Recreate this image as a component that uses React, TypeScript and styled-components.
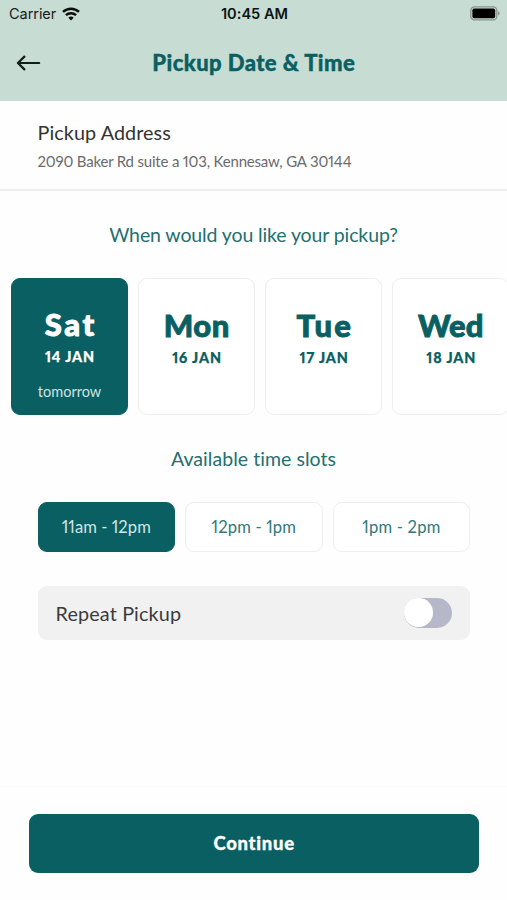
import React, { useState } from "react";
import styled, { createGlobalStyle } from "styled-components";

const TEAL = "#0a5f62";
const MINT = "#c7dcd3";
const LINE = "#eeeeee";

const GlobalStyle = createGlobalStyle`
  *, *::before, *::after { box-sizing: border-box; }
  body {
    margin: 0;
    background: #fefefe;
    font-family: Lato, "Open Sans", sans-serif;
    font-variant-ligatures: none;
    font-variant-numeric: proportional-nums;
  }
  button { font: inherit; cursor: pointer; }
`;

const Screen = styled.div`
  width: 507px;
  height: 900px;
  display: flex;
  flex-direction: column;
  overflow: hidden;
  background: #fefefe;
`;

const Header = styled.header`
  flex: none;
  height: 100.5px;
  background: ${MINT};
`;

const StatusBar = styled.div`
  height: 27px;
  padding: 0 7px 0 9px;
  display: grid;
  grid-template-columns: 1fr auto 1fr;
  align-items: center;
  font-family: Inter, sans-serif;
  font-size: 14.5px;
  color: #17201e;
`;

const Carrier = styled.span`
  display: flex;
  align-items: center;
  gap: 6px;
  letter-spacing: -0.05px;
`;

const Clock = styled.time`
  font-weight: 600;
  font-size: 14.6px;
  color: #0c1413;
`;

const Battery = styled.svg`
  justify-self: end;
  display: block;
`;

const TitleBar = styled.div`
  height: 71px;
  padding: 0 16px;
  display: grid;
  grid-template-columns: 26px 1fr 26px;
  align-items: center;
`;

const BackButton = styled.button`
  padding: 0;
  border: 0;
  background: none;
  display: flex;
  color: #151d1b;
`;

/* letter-spacing adds a gap after the last letter; the margin takes it back */
const Spaced = styled.span<{ $gap: number }>`
  display: block;
  white-space: nowrap;
  letter-spacing: ${(p) => p.$gap}px;
  margin-right: ${(p) => -p.$gap}px;
`;

const Title = styled.h1`
  margin: 0;
  justify-self: center;
  font-size: 22px;
  line-height: 28px;
  font-weight: 900;
  -webkit-text-stroke: 0.4px;
  color: ${TEAL};
`;

const Address = styled.section`
  flex: none;
  height: 90px;
  padding: 19px 38px 0 37.5px;
  border-bottom: 2px solid ${LINE};
`;

const AddressTitle = styled.h2`
  margin: 0;
  font-size: 19.8px;
  line-height: 24px;
  font-weight: 400;
  color: #333;
`;

const AddressLine = styled.p`
  margin: 7px 0 0;
  font-size: 15px;
  line-height: 20px;
  color: #6b6b6b;
`;

const Heading = styled.h3`
  margin: 0;
  display: flex;
  justify-content: center;
  font-size: 19.5px;
  line-height: 24px;
  font-weight: 400;
  color: #23706f;
`;

const Main = styled.main`
  flex: 1;
  min-height: 0;
  padding-top: 32px;
`;

const Days = styled.div`
  margin: 31px 0 32px;
  padding-left: 11px;
  display: flex;
  gap: 10.1px;
  overflow: hidden;
`;

const DayCard = styled.button<{ $active: boolean }>`
  flex: none;
  width: 117px;
  height: 137px;
  padding: ${(p) => (p.$active ? 27 : 28)}px 0 0;
  display: flex;
  flex-direction: column;
  align-items: center;
  border: 1.5px solid ${(p) => (p.$active ? TEAL : LINE)};
  border-radius: 9px;
  background: ${(p) => (p.$active ? TEAL : "#fff")};
  color: ${(p) => (p.$active ? "#fff" : TEAL)};
`;

const DayName = styled.span`
  font-size: 31px;
  line-height: 36px;
  font-weight: 900;
  -webkit-text-stroke: 0.9px;
`;

const DayDate = styled.span`
  margin-top: 6px;
  font-size: 14.3px;
  line-height: 18px;
  font-weight: 900;
  -webkit-text-stroke: 0.25px;
`;

const DayNote = styled.span`
  margin-top: 16px;
  font-size: 14.5px;
  line-height: 20px;
  color: #cfe3e1;
`;

const Slots = styled.div`
  margin: 31px 37px 0 37.5px;
  display: grid;
  grid-template-columns: repeat(3, 1fr);
  gap: 10px;
`;

const Slot = styled.button<{ $active: boolean }>`
  height: 50px;
  padding: 0;
  display: flex;
  align-items: center;
  justify-content: center;
  border: 1.5px solid ${(p) => (p.$active ? TEAL : LINE)};
  border-radius: 9px;
  background: ${(p) => (p.$active ? TEAL : "#fff")};
  color: ${(p) => (p.$active ? "#cfe6e3" : "#30797a")};
  font-size: 16.6px;
`;

const Repeat = styled.label`
  margin: 34px 37px 0 37.5px;
  height: 54px;
  padding: 0 18px;
  display: flex;
  align-items: center;
  justify-content: space-between;
  border-radius: 9px;
  background: #f1f1f1;
  font-size: 19.8px;
  color: #3b3b3b;
`;

const Switch = styled.button<{ $on: boolean }>`
  width: 48px;
  height: 30px;
  padding: 0;
  display: flex;
  align-items: center;
  justify-content: ${(p) => (p.$on ? "flex-end" : "flex-start")};
  border: 0;
  border-radius: 15px;
  background: ${(p) => (p.$on ? TEAL : "#b6b8c9")};
`;

const Knob = styled.span`
  width: 28.5px;
  height: 28.5px;
  border-radius: 50%;
  background: #fff;
`;

const Footer = styled.footer`
  flex: none;
  height: 114px;
  padding: 26.5px 28px 0 28.5px;
  border-top: 1px solid #f9f9f9;
`;

const Continue = styled.button`
  width: 100%;
  height: 59px;
  padding: 0 0 1px;
  display: flex;
  align-items: center;
  justify-content: center;
  border: 0;
  border-radius: 9px;
  background: ${TEAL};
  color: #fff;
  font-size: 18.5px;
  font-weight: 900;
  -webkit-text-stroke: 0.3px;
`;

const days = [
  { name: "Sat", gap: 2.7, date: "14 JAN", note: "tomorrow" },
  { name: "Mon", gap: 0.5, date: "16 JAN" },
  { name: "Tue", gap: 2.1, date: "17 JAN" },
  { name: "Wed", gap: 0.2, date: "18 JAN" },
];

const slots = [
  { label: "11am - 12pm", gap: 0.05 },
  { label: "12pm - 1pm", gap: 0.15 },
  { label: "1pm - 2pm", gap: 0.2 },
];

export default function App() {
  const [day, setDay] = useState(0);
  const [slot, setSlot] = useState(0);
  const [repeat, setRepeat] = useState(false);

  return (
    <Screen>
      <GlobalStyle />
      <Header>
        <StatusBar>
          <Carrier>
            Carrier
            <svg width="18" height="14" viewBox="0 0 18 14" fill="none" stroke="#0b0f0e" strokeWidth="2.5">
              <path d="M1 4.9a11.6 11.6 0 0 1 16 0" />
              <path d="M3.9 8.2a7.4 7.4 0 0 1 10.2 0" />
              <path d="M9 13.4 6.3 10.700a3.900 3.900 0 0 1 5.400 0z" fill="#0b0f0e" stroke="none" />
            </svg>
          </Carrier>
          <Clock>10:45 AM</Clock>
          <Battery width="30" height="15" viewBox="0 0 30 15">
            <rect x="0.8" y="0.8" width="26" height="13" rx="3.6" fill="none" stroke="#87958f" strokeWidth="1.3" />
            <rect x="2.4" y="2.4" width="22.8" height="9.8" rx="1.8" fill="#000" />
            <path d="M28 5.2c1.1.4 1.7 1.2 1.7 2.1s-.6 1.7-1.7 2.1z" fill="#87958f" />
          </Battery>
        </StatusBar>
        <TitleBar>
          <BackButton aria-label="Back">
            <svg width="26" height="18" viewBox="0 0 26 18" fill="none" stroke="currentColor" strokeWidth="2.2" strokeLinecap="round" strokeLinejoin="round">
              <path d="M23.2 9H2M8.400 2.600 1.900 9l6.500 6.400" />
            </svg>
          </BackButton>
          <Title>
            <Spaced $gap={0.44}>Pickup Date &amp; Time</Spaced>
          </Title>
        </TitleBar>
      </Header>

      <Address>
        <AddressTitle>
          <Spaced $gap={0.08}>Pickup Address</Spaced>
        </AddressTitle>
        <AddressLine>
          <Spaced $gap={-0.19}>2090 Baker Rd suite a 103, Kennesaw, GA 30144</Spaced>
        </AddressLine>
      </Address>

      <Main>
        <Heading>
          <Spaced $gap={-0.11}>When would you like your pickup?</Spaced>
        </Heading>
        <Days>
          {days.map((d, i) => (
            <DayCard key={d.date} $active={i === day} onClick={() => setDay(i)}>
              <DayName>
                <Spaced $gap={d.gap}>{d.name}</Spaced>
              </DayName>
              <DayDate>
                <Spaced $gap={0.9}>{d.date}</Spaced>
              </DayDate>
              {d.note && <DayNote>{d.note}</DayNote>}
            </DayCard>
          ))}
        </Days>

        <Heading>
          <Spaced $gap={0.05}>Available time slots</Spaced>
        </Heading>
        <Slots>
          {slots.map((s, i) => (
            <Slot key={s.label} $active={i === slot} onClick={() => setSlot(i)}>
              <Spaced $gap={s.gap}>{s.label}</Spaced>
            </Slot>
          ))}
        </Slots>

        <Repeat>
          <Spaced $gap={0.15}>Repeat Pickup</Spaced>
          <Switch role="switch" aria-checked={repeat} $on={repeat} onClick={() => setRepeat(!repeat)}>
            <Knob />
          </Switch>
        </Repeat>
      </Main>

      <Footer>
        <Continue>
          <Spaced $gap={0.7}>Continue</Spaced>
        </Continue>
      </Footer>
    </Screen>
  );
}
